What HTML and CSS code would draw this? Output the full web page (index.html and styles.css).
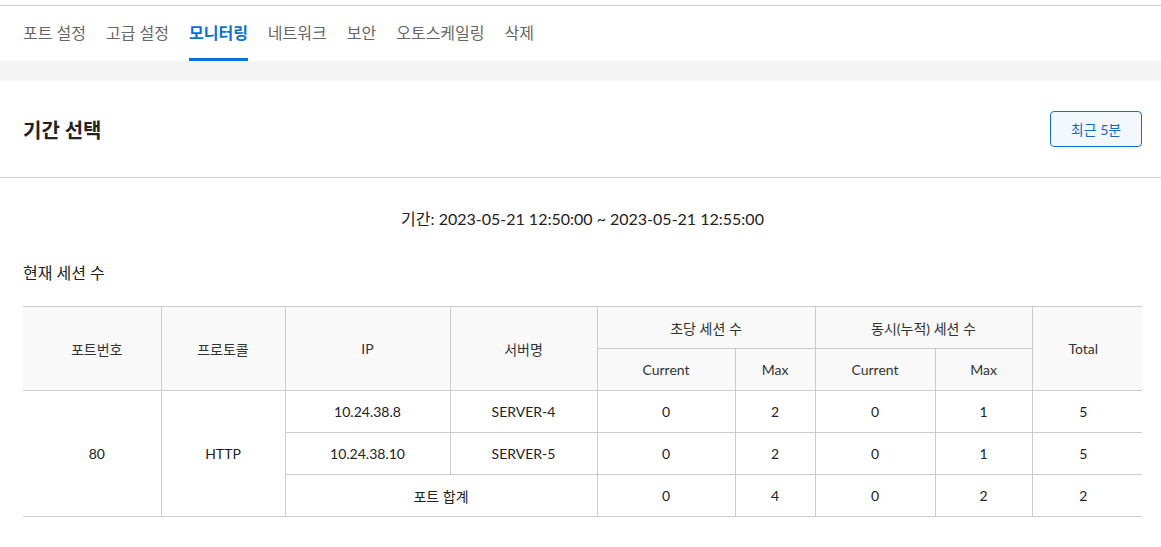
FILE: index.html
```html
<!DOCTYPE html>
<html lang="ko">
<head>
    <meta charset="UTF-8">
    <meta name="viewport" content="width=device-width, initial-scale=1.0">
    <title>모니터링</title>
    <link rel="stylesheet" href="styles.css">
</head>
<body>

<div class="page">
    <ul class="tabs">
        <li>포트 설정</li>
        <li>고급 설정</li>
        <li class="active">모니터링</li>
        <li>네트워크</li>
        <li>보안</li>
        <li>오토스케일링</li>
        <li>삭제</li>
    </ul>

    <div class="band"></div>

    <div class="period-head">
        <h2>기간 선택</h2>
        <button type="button" class="btn-range">최근 5분</button>
    </div>

    <div class="content">
        <p class="period">기간: 2023-05-21 12:50:00 ~ 2023-05-21 12:55:00</p>

        <h3>현재 세션 수</h3>

        <table class="sessions">
            <colgroup>
                <col style="width: 138px">
                <col style="width: 124px">
                <col style="width: 165px">
                <col style="width: 147px">
                <col style="width: 138px">
                <col style="width: 80px">
                <col style="width: 120px">
                <col style="width: 97px">
                <col style="width: 110px">
            </colgroup>
            <thead>
                <tr>
                    <th rowspan="2" class="edge">포트번호</th>
                    <th rowspan="2">프로토콜</th>
                    <th rowspan="2">IP</th>
                    <th rowspan="2">서버명</th>
                    <th colspan="2">초당 세션 수</th>
                    <th colspan="2">동시(누적) 세션 수</th>
                    <th rowspan="2" class="end">Total</th>
                </tr>
                <tr>
                    <th>Current</th>
                    <th>Max</th>
                    <th>Current</th>
                    <th>Max</th>
                </tr>
            </thead>
            <tbody>
                <tr>
                    <td rowspan="3" class="edge">80</td>
                    <td rowspan="3">HTTP</td>
                    <td>10.24.38.8</td>
                    <td>SERVER-4</td>
                    <td>0</td>
                    <td>2</td>
                    <td>0</td>
                    <td>1</td>
                    <td class="end">5</td>
                </tr>
                <tr>
                    <td>10.24.38.10</td>
                    <td>SERVER-5</td>
                    <td>0</td>
                    <td>2</td>
                    <td>0</td>
                    <td>1</td>
                    <td class="end">5</td>
                </tr>
                <tr>
                    <td colspan="2">포트 합계</td>
                    <td>0</td>
                    <td>4</td>
                    <td>0</td>
                    <td>2</td>
                    <td class="end">2</td>
                </tr>
            </tbody>
        </table>
    </div>
</div>

</body>
</html>
```

FILE: styles.css
```css
body {
    margin: 0;
    font-family: Lato, "Noto Sans CJK KR", sans-serif;
    color: #333;
    background: #fff;
}
.page {
    margin-top: 5px;
    border-top: 1px solid #ccc;
}

/* tab menu */
.tabs {
    display: flex;
    gap: 20px;
    list-style: none;
    margin: 0;
    padding: 0 23px;
}
.tabs li {
    padding: 16px 0 14px;
    font-size: 16px;
    line-height: 22px;
    color: #666;
    border-bottom: 3px solid transparent;
}
.tabs li.active {
    color: #0a6fd6;
    font-weight: bold;
    border-bottom-color: #0073d9;
}
.band {
    height: 20px;
    background-color: #f4f4f4;
}

/* period selection */
.period-head {
    display: flex;
    align-items: center;
    justify-content: space-between;
    height: 96px;
    padding: 0 19px 0 23px;
    border-bottom: 1px solid #ccc;
}
.period-head h2 {
    margin: 0;
    font-size: 20px;
    color: #222;
}
.btn-range {
    width: 92px;
    height: 36px;
    border: 1px solid #0a74d2;
    border-radius: 4px;
    background-color: #f3f8fd;
    color: #1469c7;
    font-family: inherit;
    font-size: 14px;
    cursor: pointer;
}

.content {
    padding: 29px 19px 0 23px;
}
.period {
    margin: 0;
    text-align: center;
    font-size: 16px;
    line-height: 24px;
    color: #222;
}
.content h3 {
    margin: 31px 0 22px;
    font-size: 16px;
    line-height: 22px;
    font-weight: normal;
    color: #222;
}

/* session table */
.sessions {
    width: 1119px;
    table-layout: fixed;
    border-collapse: collapse;
    border-top: 1px solid #ccc;
    font-size: 14px;
}
.sessions th,
.sessions td {
    height: 41px;
    padding: 0;
    text-align: center;
    border-left: 1px solid #ccc;
    border-bottom: 1px solid #ccc;
}
.sessions th {
    font-weight: normal;
    background-color: #f9f9f9;
    color: #333;
}
.sessions td {
    color: #222;
}
.sessions .edge {
    border-left: none;
    padding-left: 10px;
}
.sessions .end {
    padding-right: 8px;
}
```
